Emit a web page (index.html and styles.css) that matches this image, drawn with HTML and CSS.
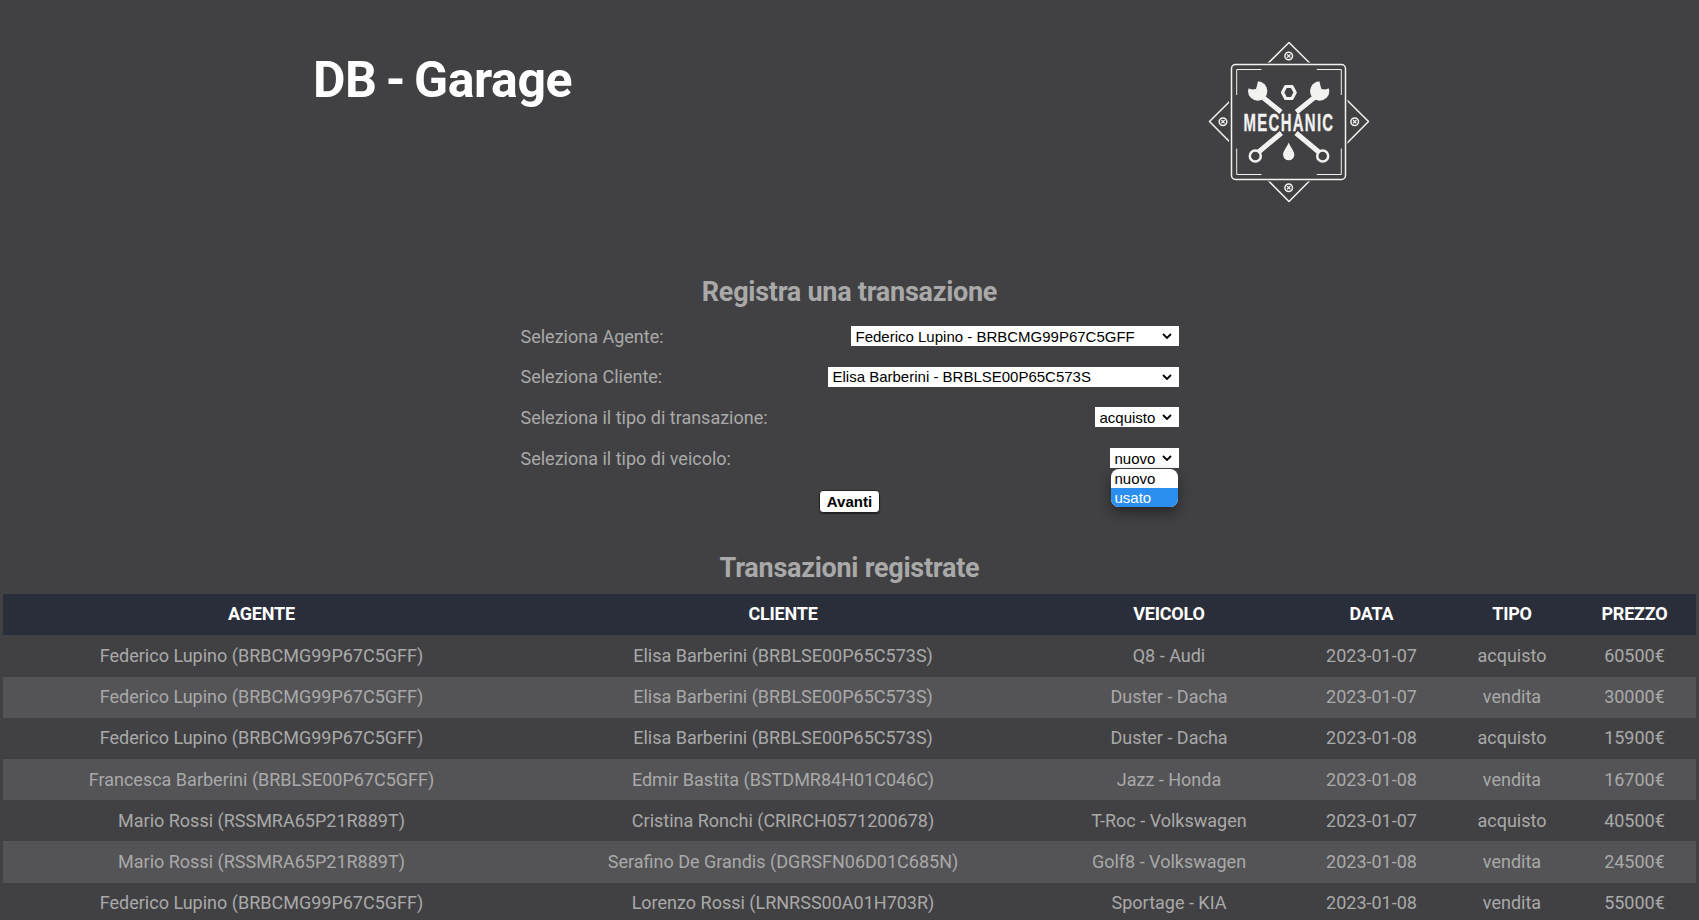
FILE: index.html
```html
<!DOCTYPE html>
<html lang="en">
<head>
    <meta charset="UTF-8">
    <title>DB - Garage</title>
    <link rel="stylesheet" href="styles.css">
</head>
<body>
    <header class="top">
        <h1>DB - Garage</h1>
        <svg class="logo" viewBox="0 0 220 200" width="220" height="200">
            <g fill="none" stroke="#f2f2f0" stroke-width="1.5" stroke-linejoin="round">
                <path d="M109 22.500 L188.500 101.500 L109 181.500 L29.500 101.500 Z"/>
                <rect x="49" y="42.500" width="118.500" height="119" fill="#414143" stroke="none"/>
                <rect x="51.500" y="44.500" width="114" height="115" rx="4"/>
                <path d="M81.500 49.500 H56.700 V75 M136.700 49.500 H161.300 V75 M56.700 128.500 V154.500 H81.500 M136.700 154.500 H161.300 V128.500" stroke-width="1"/>
                <path d="M102.500 72.500 L105.700 66.500 L112 66.500 L115.200 72.500 L112 78.500 L105.700 78.500 Z" stroke-width="3.200"/>
            </g>
            <g fill="none" stroke="#f2f2f0" stroke-width="1.500">
                <circle cx="108.700" cy="36" r="3.800"/>
                <circle cx="43" cy="101.700" r="3.800"/>
                <circle cx="174.700" cy="101.700" r="3.800"/>
                <circle cx="108.700" cy="167.700" r="3.800"/>
                <path d="M107 34.300 l3.400 3.400 m0 -3.400 l-3.400 3.400 M41.300 100 l3.400 3.400 m0 -3.400 l-3.400 3.400 M173 100 l3.400 3.400 m0 -3.400 l-3.400 3.400 M107 166 l3.400 3.400 m0 -3.400 l-3.400 3.400" stroke-width="1.200"/>
            </g>
            <!-- wrenches -->
            <g stroke="#f2f2f0" fill="none">
                <path d="M80 75 L101 92 M116 113 L140 133" stroke-width="5"/>
                <path d="M137.400 75 L116.400 92 M101.400 113 L77.400 133" stroke-width="5"/>
                <circle cx="75.300" cy="136" r="5.500" stroke-width="2.500" fill="#414143"/>
                <circle cx="142.700" cy="136" r="5.500" stroke-width="2.500" fill="#414143"/>
            </g>
            <g fill="#f2f2f0">
                <circle cx="77.700" cy="71" r="9.700"/>
                <circle cx="139.700" cy="71" r="9.700"/>
                <path d="M108.700 122.500 C111 128 114.300 131 114.300 134.700 A5.600 5.600 0 0 1 103.100 134.700 C103.100 131 106.400 128 108.700 122.500 Z"/>
            </g>
            <g fill="#414143">
                <path d="M68.300 68.300 L72 69.500 L76 69 L77 65.500 L78 61.300 L66 56 Z"/>
                <path d="M149.100 68.300 L145.400 69.500 L141.400 69 L140.400 65.500 L139.400 61.300 L151.400 56 Z"/>
            </g>
            <text class="logo-text" x="167.700" y="110.700" transform="scale(0.65 1)" text-anchor="middle">MECHANIC</text>
        </svg>
    </header>

    <main>
        <h2>Registra una transazione</h2>
        <form class="form">
            <div class="form-row">
                <label>Seleziona Agente:</label>
                <select class="sel-agente"><option>Federico Lupino - BRBCMG99P67C5GFF</option></select>
            </div>
            <div class="form-row">
                <label>Seleziona Cliente:</label>
                <select class="sel-cliente"><option>Elisa Barberini - BRBLSE00P65C573S</option></select>
            </div>
            <div class="form-row">
                <label>Seleziona il tipo di transazione:</label>
                <select class="sel-tipo"><option>acquisto</option></select>
            </div>
            <div class="form-row">
                <label>Seleziona il tipo di veicolo:</label>
                <div class="select-open">
                    <select class="sel-veicolo"><option>nuovo</option></select>
                    <ul class="dropdown">
                        <li>nuovo</li>
                        <li class="active">usato</li>
                    </ul>
                </div>
            </div>
            <button class="btn" type="button">Avanti</button>
        </form>

        <h2 class="second">Transazioni registrate</h2>
        <table class="list">
            <colgroup>
                <col class="c-agente"><col class="c-cliente"><col class="c-veicolo">
                <col class="c-data"><col class="c-tipo"><col class="c-prezzo">
            </colgroup>
            <thead>
                <tr>
                    <th>AGENTE</th>
                    <th>CLIENTE</th>
                    <th>VEICOLO</th>
                    <th>DATA</th>
                    <th>TIPO</th>
                    <th>PREZZO</th>
                </tr>
            </thead>
            <tbody>
                <tr>
                    <td>Federico Lupino (BRBCMG99P67C5GFF)</td>
                    <td>Elisa Barberini (BRBLSE00P65C573S)</td>
                    <td>Q8 - Audi</td>
                    <td>2023-01-07</td>
                    <td>acquisto</td>
                    <td>60500€</td>
                </tr>
                <tr>
                    <td>Federico Lupino (BRBCMG99P67C5GFF)</td>
                    <td>Elisa Barberini (BRBLSE00P65C573S)</td>
                    <td>Duster - Dacha</td>
                    <td>2023-01-07</td>
                    <td>vendita</td>
                    <td>30000€</td>
                </tr>
                <tr>
                    <td>Federico Lupino (BRBCMG99P67C5GFF)</td>
                    <td>Elisa Barberini (BRBLSE00P65C573S)</td>
                    <td>Duster - Dacha</td>
                    <td>2023-01-08</td>
                    <td>acquisto</td>
                    <td>15900€</td>
                </tr>
                <tr>
                    <td>Francesca Barberini (BRBLSE00P67C5GFF)</td>
                    <td>Edmir Bastita (BSTDMR84H01C046C)</td>
                    <td>Jazz - Honda</td>
                    <td>2023-01-08</td>
                    <td>vendita</td>
                    <td>16700€</td>
                </tr>
                <tr>
                    <td>Mario Rossi (RSSMRA65P21R889T)</td>
                    <td>Cristina Ronchi (CRIRCH0571200678)</td>
                    <td>T-Roc - Volkswagen</td>
                    <td>2023-01-07</td>
                    <td>acquisto</td>
                    <td>40500€</td>
                </tr>
                <tr>
                    <td>Mario Rossi (RSSMRA65P21R889T)</td>
                    <td>Serafino De Grandis (DGRSFN06D01C685N)</td>
                    <td>Golf8 - Volkswagen</td>
                    <td>2023-01-08</td>
                    <td>vendita</td>
                    <td>24500€</td>
                </tr>
                <tr>
                    <td>Federico Lupino (BRBCMG99P67C5GFF)</td>
                    <td>Lorenzo Rossi (LRNRSS00A01H703R)</td>
                    <td>Sportage - KIA</td>
                    <td>2023-01-08</td>
                    <td>vendita</td>
                    <td>55000€</td>
                </tr>
            </tbody>
        </table>
    </main>
</body>
</html>
```

FILE: styles.css
```css
body {
    margin: 0;
    background-color: #414143;
    font-family: Roboto, "Liberation Sans", sans-serif;
    color: #a9a9a9;
}

.top {
    display: flex;
    height: 270px;
    padding-top: 20px;
    box-sizing: border-box;
}

h1 {
    width: 867px;
    margin: 28px 0 0 313px;
    font-size: 50px;
    line-height: 64px;
    font-weight: 700;
    color: #ffffff;
    letter-spacing: -0.4px;
    word-spacing: -3px;
}

.logo {
    display: block;
}

.logo-text {
    font-family: "Liberation Sans", sans-serif;
    font-size: 23px;
    font-weight: 700;
    letter-spacing: 2px;
    fill: #f2f2f0;
    stroke: #f2f2f0;
    stroke-width: 0.3px;
}

h2 {
    margin: 0;
    font-size: 27px;
    line-height: 44px;
    font-weight: 700;
    text-align: center;
    color: #a9a9a9;
    letter-spacing: -0.27px;
}

.form {
    width: 658px;
    margin: 0 auto;
    padding-top: 2px;
    display: flex;
    flex-direction: column;
}

.form-row {
    display: flex;
    justify-content: space-between;
    align-items: center;
    height: 40.6px;
    font-size: 18px;
}

select {
    appearance: none;
    font-family: "Liberation Sans", Arial, sans-serif;
    font-size: 15px;
    height: 20px;
    border: none;
    border-radius: 0;
    padding: 0 0 0 5px;
    background: #ffffff url("data:image/svg+xml,%3Csvg xmlns='http://www.w3.org/2000/svg' width='10' height='6'%3E%3Cpath d='M1 1l4 4 4-4' fill='none' stroke='%23000' stroke-width='1.8'/%3E%3C/svg%3E") no-repeat right 7px center;
    color: #000000;
    display: block;
}

.sel-agente { width: 328px; }
.sel-cliente { width: 351px; }
.sel-tipo { width: 84px; }
.sel-veicolo { width: 69px; }

.select-open {
    position: relative;
}

.dropdown {
    position: absolute;
    top: 21px;
    right: 1px;
    width: 67px;
    height: 38px;
    margin: 0;
    padding: 0;
    list-style: none;
    background: #ffffff;
    border-radius: 8px;
    overflow: hidden;
    box-shadow: 0 6px 14px rgba(0, 0, 0, 0.4);
    font-family: "Liberation Sans", Arial, sans-serif;
    font-size: 15px;
    line-height: 19px;
    color: #000000;
}

.dropdown li {
    padding-left: 4px;
}

.dropdown .active {
    background: #2b8ff0;
    color: #ffffff;
}

.btn {
    align-self: center;
    margin-top: 12px;
    height: 23px;
    width: 61px;
    padding: 0;
    border: 1px solid #222;
    border-radius: 4px;
    background: #ffffff;
    font-family: "Liberation Sans", Arial, sans-serif;
    font-size: 15px;
    font-weight: 700;
    color: #000000;
    box-shadow: 0 1px 1px #222;
}

.second {
    margin-top: 32.5px;
}

.list {
    width: 1693px;
    margin: 4.500px 3px 0;
    border-collapse: collapse;
    table-layout: fixed;
    font-size: 18px;
}

.c-agente { width: 517px; }
.c-cliente { width: 526px; }
.c-veicolo { width: 246px; }
.c-data { width: 159px; }
.c-tipo { width: 122px; }
.c-prezzo { width: 123px; }

.list th {
    height: 41px;
    padding: 0 0 2px;
    box-sizing: border-box;
    background-color: #2a2d3a;
    color: #ffffff;
    font-weight: 700;
    letter-spacing: -0.2px;
}

.list td {
    height: 41.2px;
    padding: 0 0 1px;
    box-sizing: border-box;
    text-align: center;
    white-space: nowrap;
}

.list tbody tr:nth-child(even) {
    background-color: #545456;
}
```
